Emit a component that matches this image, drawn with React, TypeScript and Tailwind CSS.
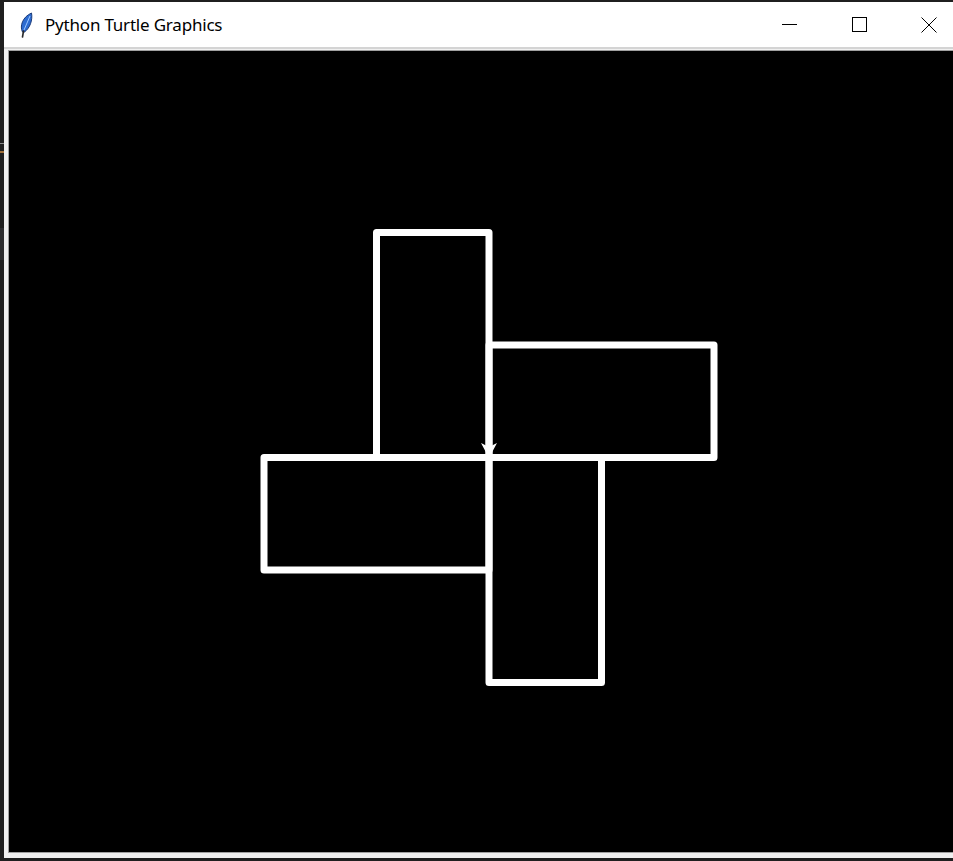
const C = { x: 489, y: 457.5 };
const S = 112.5;
const L = 225;

const rects = [
  { x: C.x - S, y: C.y - L, w: S, h: L },
  { x: C.x, y: C.y - S, w: L, h: S },
  { x: C.x - L, y: C.y, w: L, h: S },
  { x: C.x, y: C.y, w: S, h: L },
];

function Feather() {
  return (
    <svg width="14" height="26" viewBox="0 0 14 26">
      <path d="M3.5 20 C0.5 14 3.5 5 12.5 1 C13.8 8 11 16 5.5 20 Z" fill="#2d6bd0" stroke="#1b3a78" strokeWidth="1" />
      <path d="M5 18 L11 4" stroke="#9cc8ff" strokeWidth="1" />
      <path d="M4.5 19 L3.5 25" stroke="#2a2a2a" strokeWidth="1.6" strokeLinecap="round" />
    </svg>
  );
}

function TitleBar() {
  return (
    <div className="flex h-[45px] items-center bg-white">
      <div className="ml-[15px] flex">
        <Feather />
      </div>
      <span className="ml-[12px] text-[17px] leading-none tracking-[-0.2px] text-black [font-family:'Noto_Sans',sans-serif]">
        Python Turtle Graphics
      </span>
      <div className="ml-auto flex h-full">
        <div className="flex w-[70px] items-center justify-center">
          <svg width="15" height="15" viewBox="0 0 15 15">
            <path d="M0 7.5 H15" stroke="#000" strokeWidth="1" />
          </svg>
        </div>
        <div className="flex w-[70px] items-center justify-center">
          <svg width="15" height="15" viewBox="0 0 15 15">
            <rect x="0.5" y="0.5" width="14" height="14" fill="none" stroke="#000" strokeWidth="1" />
          </svg>
        </div>
        <div className="flex w-[70px] items-center justify-center">
          <svg width="16" height="16" viewBox="0 0 16 16">
            <path d="M0.5 0.5 L15.5 15.5 M15.5 0.5 L0.5 15.5" stroke="#000" strokeWidth="1" />
          </svg>
        </div>
      </div>
    </div>
  );
}

export default function App() {
  return (
    <div className="flex h-[861px] w-[953px] overflow-hidden bg-[#1f1f1f]">
      {/* desktop strip left of the window */}
      <div className="flex w-[4px] shrink-0 flex-col">
        <div className="h-[143px]" />
        <div className="h-[1px] bg-[#8a8a8a]" />
        <div className="h-[7px]" />
        <div className="h-[2px] bg-[#a0703a]" />
        <div className="h-[75px]" />
        <div className="h-[32px] bg-[#2e2e30]" />
      </div>

      <div className="mt-[2px] flex h-[856px] w-[960px] shrink-0 flex-col bg-[#f0f0f0]">
        <TitleBar />
        <div className="flex flex-1 flex-col border-t-2 border-[#d4d4d4] px-[4px] pb-[5px] pt-[1px]">
          <div className="flex-1 overflow-hidden border border-[#a0a0a0] bg-black">
            <svg width="950" height="801" viewBox="9 51 950 801" className="block">
              {rects.map((r, i) => (
                <rect
                  key={i}
                  x={r.x}
                  y={r.y}
                  width={r.w}
                  height={r.h}
                  fill="none"
                  stroke="#fff"
                  strokeWidth="7"
                  strokeLinejoin="round"
                />
              ))}
              <polygon points="489,458 481,443 489,447 497,443" fill="#fff" />
            </svg>
          </div>
        </div>
      </div>
    </div>
  );
}
